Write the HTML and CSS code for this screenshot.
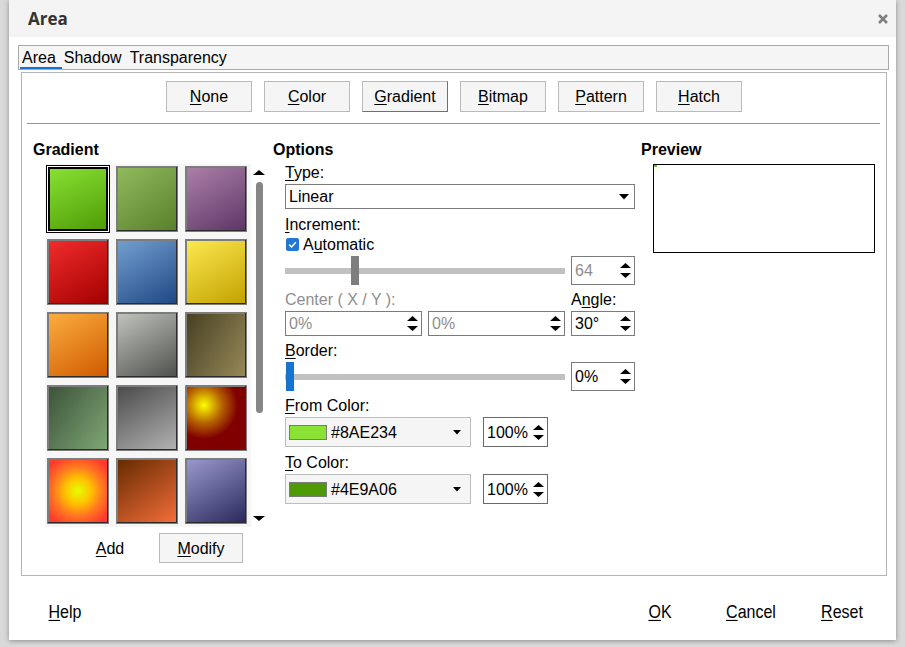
FILE: index.html
```html
<!DOCTYPE html>
<html>
<head>
<meta charset="utf-8">
<link rel="stylesheet" href="styles.css">
</head>
<body>
<div class="dialog">
  <div class="titlebar">
    <span class="title">Area</span>
    <svg class="close" width="10" height="10" viewBox="0 0 10 10"><path d="M1 1 L9 9 M9 1 L1 9" stroke="#808080" stroke-width="2.6" stroke-linecap="butt"/></svg>
  </div>
  <div class="tabs">
    <span class="tab active">Area</span>
    <span class="tab">Shadow</span>
    <span class="tab">Transparency</span>
  </div>
  <div class="panel">
    <div class="modes">
      <div class="btn"><span><u>N</u>one</span></div>
      <div class="btn"><span><u>C</u>olor</span></div>
      <div class="btn pressed"><span><u>G</u>radient</span></div>
      <div class="btn"><span><u>B</u>itmap</span></div>
      <div class="btn"><span><u>P</u>attern</span></div>
      <div class="btn"><span><u>H</u>atch</span></div>
    </div>
    <div class="sep"></div>
    <div class="cols">
      <div class="col col-grad">
        <div class="heading">Gradient</div>
        <div class="gallery">
          <div class="swatches">
            <div class="sw selected g1"></div>
            <div class="sw g2"></div>
            <div class="sw g3"></div>
            <div class="sw g4"></div>
            <div class="sw g5"></div>
            <div class="sw g6"></div>
            <div class="sw g7"></div>
            <div class="sw g8"></div>
            <div class="sw g9"></div>
            <div class="sw g10"></div>
            <div class="sw g11"></div>
            <div class="sw g12"></div>
            <div class="sw g13"></div>
            <div class="sw g14"></div>
            <div class="sw g15"></div>
          </div>
          <div class="vscroll">
            <svg width="12" height="5" viewBox="0 0 12 5"><polygon points="0,5 6,0 12,5" fill="#000"/></svg>
            <div class="vthumb"></div>
            <svg class="vdown" width="12" height="5" viewBox="0 0 12 5"><polygon points="0,0 12,0 6,5" fill="#000"/></svg>
          </div>
        </div>
        <div class="gbtns">
          <div class="fbtn"><span><u>A</u>dd</span></div>
          <div class="fbtn boxed"><span><u>M</u>odify</span></div>
        </div>
      </div>

      <div class="col col-opt">
        <div class="heading">Options</div>
        <div class="body">
          <div class="lbl lbl-type"><u>T</u>ype:</div>
          <div class="combo">
            <span>Linear</span>
            <svg width="10" height="6" viewBox="0 0 10 6"><polygon points="0,0 10,0 5,5.5" fill="#000"/></svg>
          </div>
          <div class="lbl lbl-gap"><u>I</u>ncrement:</div>
          <div class="check-row">
            <span class="check"><svg width="13" height="13" viewBox="0 0 13 13"><path d="M3.2 6.6 L5.6 9 L9.8 4.2" fill="none" stroke="#fff" stroke-width="1.5"/></svg></span>
            <span>A<u>u</u>tomatic</span>
          </div>
          <div class="slider-row">
            <div class="slider">
              <div class="track"></div>
              <div class="knob gray-knob"></div>
            </div>
            <div class="spin disabled"><span>64</span><svg width="11" height="15" viewBox="0 0 11 15"><polygon points="0,5 5.5,0 11,5" fill="#000"/><polygon points="0,10 5.5,15 11,10" fill="#000"/></svg></div>
          </div>
          <div class="center-row">
            <div class="lbl dim span2">Center ( X / Y ):</div>
            <div class="lbl">A<u>n</u>gle:</div>
          </div>
          <div class="fields-row">
            <div class="spin disabled"><span>0%</span><svg width="11" height="15" viewBox="0 0 11 15"><polygon points="0,5 5.5,0 11,5" fill="#000"/><polygon points="0,10 5.5,15 11,10" fill="#000"/></svg></div>
            <div class="spin disabled"><span>0%</span><svg width="11" height="15" viewBox="0 0 11 15"><polygon points="0,5 5.5,0 11,5" fill="#000"/><polygon points="0,10 5.5,15 11,10" fill="#000"/></svg></div>
            <div class="spin"><span>30°</span><svg width="11" height="15" viewBox="0 0 11 15"><polygon points="0,5 5.5,0 11,5" fill="#000"/><polygon points="0,10 5.5,15 11,10" fill="#000"/></svg></div>
          </div>
          <div class="lbl lbl-gap5"><u>B</u>order:</div>
          <div class="slider-row">
            <div class="slider">
              <div class="track"></div>
              <div class="knob blue-knob"></div>
            </div>
            <div class="spin"><span>0%</span><svg width="11" height="15" viewBox="0 0 11 15"><polygon points="0,5 5.5,0 11,5" fill="#000"/><polygon points="0,10 5.5,15 11,10" fill="#000"/></svg></div>
          </div>
          <div class="lbl lbl-gap5"><u>F</u>rom Color:</div>
          <div class="color-row">
            <div class="cdrop">
              <span class="cswatch from"></span>
              <span class="ctext">#8AE234</span>
              <svg width="8" height="5" viewBox="0 0 8 5"><polygon points="0,0 8,0 4,4.5" fill="#000"/></svg>
            </div>
            <div class="spin pct"><span>100%</span><svg width="11" height="15" viewBox="0 0 11 15"><polygon points="0,5 5.5,0 11,5" fill="#000"/><polygon points="0,10 5.5,15 11,10" fill="#000"/></svg></div>
          </div>
          <div class="lbl lbl-gap"><u>T</u>o Color:</div>
          <div class="color-row">
            <div class="cdrop">
              <span class="cswatch to"></span>
              <span class="ctext">#4E9A06</span>
              <svg width="8" height="5" viewBox="0 0 8 5"><polygon points="0,0 8,0 4,4.5" fill="#000"/></svg>
            </div>
            <div class="spin pct"><span>100%</span><svg width="11" height="15" viewBox="0 0 11 15"><polygon points="0,5 5.5,0 11,5" fill="#000"/><polygon points="0,10 5.5,15 11,10" fill="#000"/></svg></div>
          </div>
        </div>
      </div>

      <div class="col col-prev">
        <div class="heading">Preview</div>
        <div class="preview"><span class="pdot"></span></div>
      </div>
    </div>
  </div>
  <div class="footer">
    <div class="fbtn"><span class="tall"><u>H</u>elp</span></div>
    <div class="right">
      <div class="fbtn"><span class="tall"><u>O</u>K</span></div>
      <div class="fbtn"><span class="tall"><u>C</u>ancel</span></div>
      <div class="fbtn"><span class="tall"><u>R</u>eset</span></div>
    </div>
  </div>
</div>
</body>
</html>
```

FILE: styles.css
```css
* { box-sizing: border-box; }
html, body { margin: 0; padding: 0; }
body {
  width: 905px;
  height: 647px;
  overflow: hidden;
  background: #d9d9d9;
  font-family: "Liberation Sans", Arial, sans-serif;
  font-size: 16px;
  color: #000;
}
u { text-decoration: underline; text-decoration-thickness: 1px; text-underline-offset: 2px; }

.dialog {
  margin-left: 9px;
  width: 887px;
  height: 640px;
  background: #fff;
  box-shadow: 0 1px 5px rgba(0,0,0,0.35);
  display: flex;
  flex-direction: column;
}

.titlebar {
  height: 37px;
  flex: none;
  background: #f4f4f4;
  display: flex;
  align-items: center;
  padding: 0 8px 0 19px;
}
.title {
  font-family: "Open Sans", "Noto Sans", sans-serif;
  font-weight: 700;
  font-size: 17px;
  line-height: 37px;
  color: #333;
}
.close { margin-left: auto; margin-top: 1px; }

.tabs {
  margin: 8px 0 0 9px;
  width: 871px;
  height: 25px;
  flex: none;
  border: 1px solid #a9a9a9;
  background: #f5f5f5;
  display: flex;
  gap: 4px;
  padding-left: 1px;
}
.tab {
  position: relative;
  height: 23px;
  padding: 2px 2px 0;
  line-height: 20px;
}
.tab.active::after {
  content: "";
  position: absolute;
  left: 0;
  right: -4px;
  bottom: 0;
  height: 2px;
  background: #1a72cf;
}

.panel {
  margin: 2px 0 0 12px;
  width: 866px;
  height: 504px;
  flex: none;
  border: 1px solid #b5b5b5;
}

.modes {
  display: flex;
  justify-content: center;
  gap: 12px;
  padding-top: 8px;
}
.btn {
  width: 86px;
  height: 31px;
  border: 1px solid #bababa;
  background: #f5f5f5;
  display: flex;
  align-items: center;
  justify-content: center;
  line-height: 19px;
}
.btn.pressed { border-color: #bababa #707070 #707070 #bababa; }

.sep {
  height: 1px;
  background: #939393;
  margin: 11px 6px 0 5px;
}

.cols {
  display: flex;
  gap: 6px;
  padding: 16px 11px 0;
}
.col-grad { width: 234px; }
.col-opt { width: 362px; }
.col-prev { width: 234px; }
.heading { font-weight: 700; line-height: 19px; }

.gallery { display: flex; margin: 5px 0 0 12px; }
.swatches {
  display: grid;
  grid-template-columns: repeat(3, 62px);
  grid-auto-rows: 66px;
  gap: 7px;
  padding: 2px 4px 3px 2px;
  background: #f6f6f6;
}
.sw {
  border: 1px solid #7d7d7d;
  box-shadow: inset -1px -1px 0 #2b2b2b, inset 1px 1px 0 #7d7d7d;
}
.sw.selected {
  border: 1px solid #fff;
  box-shadow: 0 0 0 1px #000, inset 0 0 0 2px #000;
}
.g1 { background: linear-gradient(155deg, #8ae234, #4e9a06); }
.g2 { background: linear-gradient(145deg, #92ba5e, #57802b); }
.g3 { background: linear-gradient(150deg, #ad80a9, #5c3566); }
.g4 { background: linear-gradient(150deg, #f22c2c, #a20000); }
.g5 { background: linear-gradient(150deg, #73a0d0, #1f4784); }
.g6 { background: linear-gradient(150deg, #fcea50, #c3a000); }
.g7 { background: linear-gradient(150deg, #fcae3f, #cf5a00); }
.g8 { background: linear-gradient(150deg, #c2c5be, #4e504c); }
.g9 { background: linear-gradient(120deg, #463f22, #978958); }
.g10 { background: linear-gradient(125deg, #3b5238, #80a877); }
.g11 { background: linear-gradient(150deg, #4a4a4a, #b3b3b3); }
.g12 { background: radial-gradient(circle at 30% 30%, #ffff00 0%, #e0c000 12%, #b46000 30%, #800000 55%, #800000 100%); }
.g13 { background: radial-gradient(circle at 50% 50%, #e4ff00 0%, #ffc000 30%, #ff7a20 55%, #ff3a2e 85%); }
.g14 { background: linear-gradient(145deg, #652a00, #f56e3a); }
.g15 { background: linear-gradient(150deg, #9a9ad0, #28285a); }

.vscroll {
  width: 12px;
  margin-left: 2px;
  display: flex;
  flex-direction: column;
  align-items: center;
  padding: 6px 0 6px;
}
.vscroll svg { display: block; flex: none; }
.vthumb {
  width: 7px;
  height: 231px;
  margin-top: 7px;
  border-radius: 4px;
  background: #868686;
}
.vdown { margin-top: auto; }

.gbtns { display: flex; gap: 7px; margin: 6px 0 0 35px; }
.fbtn {
  width: 84px;
  height: 30px;
  display: flex;
  align-items: center;
  justify-content: center;
  line-height: 19px;
}
.fbtn.boxed { border: 1px solid #bababa; background: #f5f5f5; }

.col-opt .body { padding-left: 12px; }
.lbl { line-height: 19px; height: 19px; }
.lbl-type { margin-top: 4px; }
.lbl-gap { margin-top: 6px; }
.lbl-gap5 { margin-top: 5px; }
.dim { color: #8e8e8e; }

.combo {
  margin-top: 2px;
  height: 25px;
  border: 1px solid #7b7b7b;
  display: flex;
  align-items: center;
  justify-content: space-between;
  padding: 0 5px 0 3px;
}
.combo svg { display: block; margin-top: 1px; }

.check-row {
  margin-top: 1px;
  height: 19px;
  display: flex;
  align-items: center;
  gap: 4px;
  line-height: 19px;
}
.check {
  width: 13px;
  height: 13px;
  border-radius: 2px;
  background: #2277d2;
  display: block;
  margin-left: 1px;
}
.check svg { display: block; }

.slider-row {
  margin-top: 2px;
  height: 29px;
  display: flex;
  gap: 6px;
}
.slider { position: relative; width: 280px; height: 29px; }
.track {
  position: absolute;
  left: 0; right: 0;
  top: 12px;
  height: 6px;
  background: #c1c1c1;
}
.knob { position: absolute; top: 0; width: 8px; height: 29px; }
.gray-knob { left: 66px; background: #7e7e7e; }
.blue-knob { left: 1px; background: #1673d0; }

.spin {
  width: 64px;
  height: 29px;
  border: 1px solid #7b7b7b;
  display: flex;
  align-items: center;
  justify-content: space-between;
  padding: 0 3px 0 3px;
  line-height: 19px;
}
.spin svg { display: block; }
.spin.disabled span { color: #8e8e8e; }

.center-row {
  margin-top: 5px;
  display: grid;
  grid-template-columns: 137px 137px 64px;
  column-gap: 6px;
}
.span2 { grid-column: span 2; }
.fields-row {
  margin-top: 2px;
  display: grid;
  grid-template-columns: 137px 137px 64px;
  column-gap: 6px;
}
.fields-row .spin { width: auto; height: 25px; }

.color-row {
  margin-top: 2px;
  height: 30px;
  display: flex;
}
.cdrop {
  width: 186px;
  height: 30px;
  border: 1px solid #bdbdbd;
  background: #f5f5f5;
  display: flex;
  align-items: center;
  padding: 0 9px 0 3px;
  line-height: 19px;
}
.cswatch {
  width: 38px;
  height: 15px;
  border: 1px solid #7a7a7a;
  display: block;
  flex: none;
}
.cswatch.from { background: #8ae234; }
.cswatch.to { background: #4e9a06; }
.ctext { margin-left: 4px; }
.cdrop svg { margin-left: auto; display: block; }
.spin.pct {
  width: 65px;
  height: 30px;
  margin-left: 12px;
  border-color: #6a6a6a;
  padding: 0 3px 0 3px;
}

.preview {
  position: relative;
  margin: 5px 0 0 12px;
  width: 222px;
  height: 89px;
  border: 1px solid #000;
}
.pdot {
  position: absolute;
  left: 0; top: 0;
  width: 3px; height: 2px;
  background: #6cc21c;
}

.footer {
  display: flex;
  justify-content: space-between;
  padding: 20px 12px 0 14px;
}
.footer .right { display: flex; gap: 7px; }
.tall { display: inline-block; transform: scaleY(1.12); }
```
